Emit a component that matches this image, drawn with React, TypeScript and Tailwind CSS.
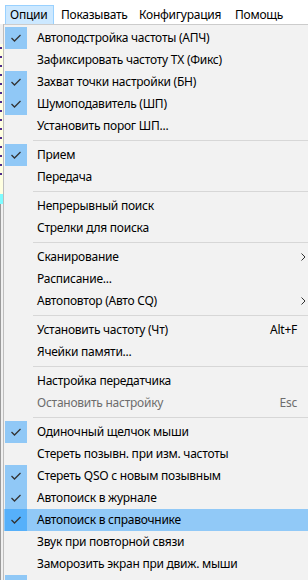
import React from "react";

type Item =
  | { sep: true }
  | {
      sep?: false;
      label: string;
      checked?: boolean;
      disabled?: boolean;
      shortcut?: string;
      sub?: boolean;
      hot?: boolean;
    };

const items: Item[] = [
  { label: "Автоподстройка частоты (АПЧ)", checked: true },
  { label: "Зафиксировать частоту TX (Фикс)" },
  { label: "Захват точки настройки (БН)", checked: true },
  { label: "Шумоподавитель (ШП)", checked: true },
  { label: "Установить порог ШП..." },
  { sep: true },
  { label: "Прием", checked: true },
  { label: "Передача" },
  { sep: true },
  { label: "Непрерывный поиск" },
  { label: "Стрелки для поиска" },
  { sep: true },
  { label: "Сканирование", sub: true },
  { label: "Расписание..." },
  { label: "Автоповтор (Авто CQ)", sub: true },
  { sep: true },
  { label: "Установить частоту (Чт)", shortcut: "Alt+F" },
  { label: "Ячейки памяти..." },
  { sep: true },
  { label: "Настройка передатчика" },
  { label: "Остановить настройку", disabled: true, shortcut: "Esc" },
  { sep: true },
  { label: "Одиночный щелчок мыши", checked: true },
  { label: "Стереть позывн. при изм. частоты" },
  { label: "Стереть QSO с новым позывным", checked: true },
  { label: "Автопоиск в журнале", checked: true },
  { label: "Автопоиск в справочнике", checked: true, hot: true },
  { label: "Звук при повторной связи" },
  { label: "Заморозить экран при движ. мыши" },
  { label: "", checked: true },
];

function Check() {
  return (
    <svg width="22" height="22" viewBox="0 0 22 22">
      <polyline
        points="6.5,11 9.5,14 15.5,8"
        fill="none"
        stroke="#333333"
        strokeWidth="1.3"
      />
    </svg>
  );
}

function Chevron() {
  return (
    <svg width="5" height="8" viewBox="0 0 5 8">
      <polyline points="0.5,0.5 4,4 0.5,7.5" fill="none" stroke="#333" strokeWidth="1" />
    </svg>
  );
}

export default function App() {
  return (
    <div
      className="w-[308px] h-[580px] overflow-hidden bg-white text-[12px] tracking-[-0.25px] text-black flex flex-col"
      style={{ fontFamily: '"Noto Sans", "Open Sans", sans-serif' }}
    >
      {/* menu bar */}
      <div className="h-[24px] flex items-start shrink-0 bg-white">
        <div className="ml-[5px] mt-[5px] w-[49px] h-[19px] border border-b-0 border-[#99d1ff] bg-[#cce8ff] pl-[4px] leading-[18px]">
          Опции
        </div>
        <div className="ml-[7px] w-[78px] mt-[5px] leading-[20px]">Показывать</div>
        <div className="w-[96px] mt-[5px] leading-[20px]">Конфигурация</div>
        <div className="mt-[5px] leading-[20px]">Помощь</div>
      </div>
      <div className="flex flex-1 min-h-0">
        {/* background window strip */}
        <div className="w-[3px] flex flex-col shrink-0">
          <div className="h-[20px] bg-[#f0f0f0]" />
          <div className="h-[150px] bg-[#ffffe1] flex flex-col gap-[7px] pt-[3px]">
            {Array.from({ length: 15 }).map((_, i) => (
              <div key={i} className="h-[2px] w-[2px] bg-[#4b2a8c]" />
            ))}
          </div>
          <div className="h-[10px] bg-[#7ffcff]" />
          <div className="flex-1 bg-[#f0f0f0] border-l border-[#9a9a9a]" />
        </div>
        <div className="w-px bg-[#bdbdbd] shrink-0" />
        {/* dropdown */}
        <div className="flex-1 bg-[#f2f2f2] border-t border-[#cccccc] pt-[2px] overflow-hidden">
          {items.map((it, i) =>
            it.sep ? (
              <div key={i} className="h-[7px] pt-[3px] pl-[29px]">
                <div className="h-px bg-[#d7d7d7]" />
              </div>
            ) : (
              <div
                key={i}
                className={`h-[22px] flex items-center ${it.hot ? "bg-[#91c9f7]" : ""}`}
              >
                <div
                  className={`ml-px w-[22px] h-[22px] shrink-0 ${
                    it.checked ? (it.hot ? "bg-[#56b0fa]" : "bg-[#90c8f6]") : ""
                  }`}
                >
                  {it.checked ? <Check /> : null}
                </div>
                <div
                  className={`ml-[10px] flex-1 whitespace-nowrap ${
                    it.disabled ? "text-[#6d6d6d]" : "text-black"
                  }`}
                >
                  {it.label}
                </div>
                {it.shortcut ? (
                  <div className={`mr-[11px] ${it.disabled ? "text-[#6d6d6d]" : "text-black"}`}>
                    {it.shortcut}
                  </div>
                ) : null}
                {it.sub ? (
                  <div className="mr-[2px] flex items-center">
                    <Chevron />
                  </div>
                ) : null}
              </div>
            )
          )}
        </div>
      </div>
    </div>
  );
}
